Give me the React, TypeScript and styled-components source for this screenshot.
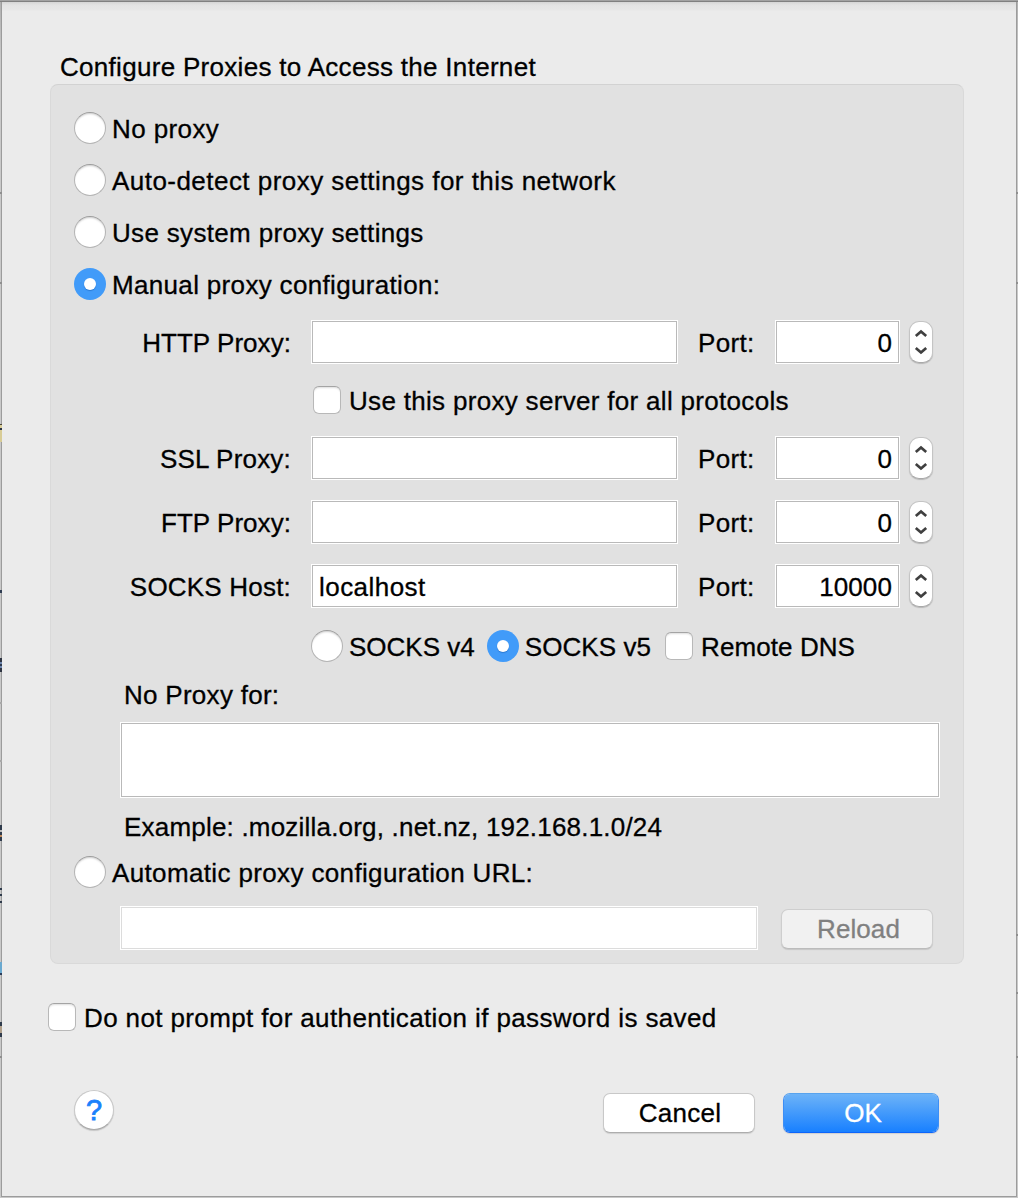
import React from "react";
import styled, { createGlobalStyle, css } from "styled-components";

const Global = createGlobalStyle`
  * { box-sizing: border-box; }
  body { margin: 0; background: #ebebeb; }
`;

const Backdrop = styled.div`
  position: relative;
  width: 1018px;
  height: 1198px;
  padding: 2px 1px 1px 1px;
  overflow: hidden;
  background: linear-gradient(#a2a2a2 0 1px, #808080 1px 2px, #b0b0b0 2px, #c9c9c9 60px);
  font: 26px/32px "Liberation Sans", Arial, sans-serif;
  color: #000;
`;

const Mark = styled.i<{ $side: "left" | "right"; $y: number; $h: number; $color: string }>`
  position: absolute;
  ${(p) => p.$side}: 0;
  top: ${(p) => p.$y}px;
  width: 2px;
  height: ${(p) => p.$h}px;
  background: ${(p) => p.$color};
`;

const Sheet = styled.main`
  height: 1195px;
  display: flex;
  flex-direction: column;
  padding-left: 49px;
  border: 1px solid #9c9c9c;
  border-top: 0;
  background: linear-gradient(#d5d5d5, #e3e3e3 3px, #e7e7e7 8px, #ebebeb 9px);
`;

const Text = styled.span<{ $ls?: number }>`
  white-space: pre;
  letter-spacing: ${(p) => p.$ls ?? 0}px;
  -webkit-text-stroke: 0.3px currentColor;
`;

const Title = styled.h1`
  margin: 0;
  height: 82px;
  padding: 49px 0 0 9px;
  font-size: 26px;
  font-weight: 400;
`;

const Panel = styled.section`
  width: 914px;
  height: 880px;
  margin-left: -1px;
  padding: 17px 23px 0 23px;
  border: 1px solid #d9d9d9;
  border-top-color: #d2d2d2;
  border-radius: 8px;
  background: #e1e1e1;
`;

const Row = styled.div<{ $h: number; $indent?: number }>`
  display: flex;
  align-items: center;
  height: ${(p) => p.$h}px;
  padding-left: ${(p) => p.$indent ?? 0}px;
`;

const Caption = styled.div`
  padding-top: 2px;
`;

const Choice = styled.label<{ $gap: number; $after?: number }>`
  display: flex;
  align-items: center;
  gap: ${(p) => p.$gap}px;
  margin-right: ${(p) => p.$after ?? 0}px;
`;

const Radio = styled.span<{ $on?: boolean }>`
  display: grid;
  place-items: center;
  width: 32px;
  height: 32px;
  border-radius: 50%;
  ${(p) =>
    p.$on
      ? css`
          background: #419bf9;
          &::after {
            content: "";
            width: 12px;
            height: 12px;
            border-radius: 50%;
            background: #fff;
            box-shadow: 0 1px 1px rgba(0, 60, 140, 0.35);
          }
        `
      : css`
          border: 1px solid #b4b4b4;
          border-top-color: #9c9c9c;
          background: #fff;
          box-shadow: inset 0 2px 2px -1px #ccc;
        `}
`;

const Check = styled.span`
  width: 28px;
  height: 28px;
  border: 1px solid #b8b8b8;
  border-top-color: #a4a4a4;
  border-radius: 6px;
  background: #fff;
  box-shadow: inset 0 2px 2px -1px #ddd;
`;

const FieldLabel = styled.div`
  width: 217px;
  margin-right: 20px;
  padding-top: 2px;
  text-align: right;
`;

const PortLabel = styled.div`
  width: 97px;
  padding: 2px 0 0 20px;
`;

const Field = styled.div<{ $w: number; $h?: number; $right?: boolean; $disabled?: boolean }>`
  display: flex;
  align-items: center;
  justify-content: ${(p) => (p.$right ? "flex-end" : "flex-start")};
  flex: none;
  width: ${(p) => p.$w}px;
  height: ${(p) => p.$h ?? 44}px;
  padding: 2px 7px 0;
  border: 1px solid #fff;
  background: #fff;
  box-shadow: inset 0 0 0 1px ${(p) => (p.$disabled ? "#dcdcdc" : "#b9b9b9")};
`;

const Stepper = styled.svg`
  width: 24px;
  height: 42px;
  margin-left: 9px;
  border: 1px solid #c4c4c4;
  border-bottom-color: #a9a9a9;
  border-radius: 10px;
  background: #fff;
  box-shadow: 0 1px 1px rgba(0, 0, 0, 0.18);
`;

const Button = styled.button<{ $kind?: "primary" | "disabled" }>`
  flex: none;
  width: 152px;
  height: 40px;
  padding: 0 0 0 2px;
  border: 1px solid #c8c8c8;
  border-bottom-color: #adadad;
  border-radius: 7px;
  background: #fff;
  box-shadow: 0 1px 1px rgba(0, 0, 0, 0.12);
  font: inherit;
  line-height: 38px;
  color: #000;
  ${(p) =>
    p.$kind === "disabled" &&
    css`
      margin: 2px 0 0 23px;
      padding-left: 3px;
      border-color: #cecece;
      border-bottom-color: #bcbcbc;
      background: #f1f1f1;
      color: #808080;
    `}
  ${(p) =>
    p.$kind === "primary" &&
    css`
      width: 156px;
      padding-left: 4px;
      border-color: #58a3ee #3d8ef5 #0d65fb;
      background: linear-gradient(#6db3f8, #1880ff) padding-box;
      color: #fff;
    `}
`;

const Prompt = styled.div`
  display: flex;
  align-items: center;
  height: 52px;
  margin: 27px 0 0 -3px;
`;

const Footer = styled.footer`
  display: flex;
  align-items: flex-start;
  padding-left: 23px;
  margin-top: 47px;
`;

const Help = styled.button`
  width: 40px;
  height: 40px;
  margin-right: 489px;
  padding: 0;
  border: 1px solid #c8c8c8;
  border-bottom-color: #aaa;
  border-radius: 50%;
  background: #fff;
  box-shadow: 0 1px 1px rgba(0, 0, 0, 0.16);
  font: 29px/38px "Liberation Sans", Arial, sans-serif;
  -webkit-text-stroke: 0.8px currentColor;
  color: #1a80fb;
`;

const Actions = styled.div`
  display: flex;
  gap: 28px;
  padding-top: 3px;
`;

const edgeMarks: { y: number; h: number; color: string; both?: boolean }[] = [
  { y: 192, h: 2, color: "#8f8f8f", both: true },
  { y: 282, h: 2, color: "#8f8f8f", both: true },
  { y: 424, h: 18, color: "linear-gradient(#4a4538 1px, #d8cc96 1px 4px, #2c3442 4px 6px, #d8cc96 6px)" },
  { y: 590, h: 3, color: "#2f3d52" },
  { y: 658, h: 14, color: "linear-gradient(#2f3542 4px, #7088b0 4px 6px, #2f3d52 6px 8px, #7088b0 8px 10px, #2f3542 10px)" },
  { y: 702, h: 2, color: "#a8a8a8" },
  { y: 760, h: 2, color: "#a8a8a8" },
  { y: 825, h: 16, color: "linear-gradient(#2f3b4c 5px, #bbb 5px 7px, #2f3b4c 7px 10px, #c08a5c 10px 12px, #2f3b4c 12px)" },
  { y: 888, h: 2, color: "#2f3b4c" },
  { y: 894, h: 2, color: "#2f3b4c" },
  { y: 901, h: 2, color: "#2f3b4c" },
  { y: 962, h: 13, color: "linear-gradient(#6aa9d0 11px, #2a3c5a 11px)" },
  { y: 1022, h: 15, color: "linear-gradient(#2f3b4c 4px, #b0a08c 4px 11px, #2f3b4c 11px)" },
  { y: 1056, h: 2, color: "#8f8f8f" },
];

const rightMarks = [934, 992, 1056];

function RadioOption({ text, on, ls, after }: { text: string; on?: boolean; ls?: number; after?: number }) {
  return (
    <Choice $gap={6} $after={after}>
      <Radio $on={on} />
      <Caption><Text $ls={ls}>{text}</Text></Caption>
    </Choice>
  );
}

function CheckOption({ text, ls }: { text: string; ls?: number }) {
  return (
    <Choice $gap={8}>
      <Check />
      <Caption><Text $ls={ls}>{text}</Text></Caption>
    </Choice>
  );
}

function ProxyRow({ label, host, port, ls }: { label: string; host?: string; port: string; ls?: number }) {
  return (
    <Row $h={64}>
      <FieldLabel>
        <Text $ls={ls}>{label}</Text>
      </FieldLabel>
      <Field $w={367}>
        <Text $ls={0.45}>{host}</Text>
      </Field>
      <PortLabel>
        <Text $ls={0.35}>Port:</Text>
      </PortLabel>
      <Field $w={125} $right>
        <Text $ls={0.1}>{port}</Text>
      </Field>
      <Stepper viewBox="0 0 22 40" fill="none" stroke="#404040" strokeWidth="2.7">
        <path d="M5.8 14 11 9.5l5.2 4.5M5.8 26l5.2 4.5 5.2-4.5" />
      </Stepper>
    </Row>
  );
}

export default function App() {
  return (
    <Backdrop>
      <Global />
      <Sheet>
        <Title>
          <Text $ls={0.3}>Configure Proxies to Access the Internet</Text>
        </Title>
        <Panel>
          <Row $h={52}><RadioOption text="No proxy" ls={0.4} /></Row>
          <Row $h={52}><RadioOption text="Auto-detect proxy settings for this network" ls={0.46} /></Row>
          <Row $h={52}><RadioOption text="Use system proxy settings" ls={0.33} /></Row>
          <Row $h={52}><RadioOption text="Manual proxy configuration:" ls={0.33} on /></Row>
          <ProxyRow label="HTTP Proxy:" port="0" ls={0.05} />
          <Row $h={52} $indent={239}><CheckOption text="Use this proxy server for all protocols" ls={0.31} /></Row>
          <ProxyRow label="SSL Proxy:" port="0" ls={0.2} />
          <ProxyRow label="FTP Proxy:" port="0" ls={0.05} />
          <ProxyRow label="SOCKS Host:" host="localhost" port="10000" ls={0.2} />
          <Row $h={56} $indent={237}>
            <RadioOption text="SOCKS v4" after={12} />
            <RadioOption text="SOCKS v5" on ls={0.08} after={14} />
            <CheckOption text="Remote DNS" ls={0.08} />
          </Row>
          <Row $h={40} $indent={50}><Caption><Text $ls={0.28}>No Proxy for:</Text></Caption></Row>
          <Row $h={92} $indent={46}><Field $w={820} $h={76} /></Row>
          <Row $h={40} $indent={50}><Caption><Text $ls={0.2}>Example: .mozilla.org, .net.nz, 192.168.1.0/24</Text></Caption></Row>
          <Row $h={52}><RadioOption text="Automatic proxy configuration URL:" ls={0.36} /></Row>
          <Row $h={60} $indent={46}>
            <Field $w={638} $disabled />
            <Button $kind="disabled" disabled><Text $ls={0.1}>Reload</Text></Button>
          </Row>
        </Panel>
        <Prompt>
          <CheckOption text="Do not prompt for authentication if password is saved" ls={0.375} />
        </Prompt>
        <Footer>
          <Help>?</Help>
          <Actions>
            <Button><Text $ls={0.25}>Cancel</Text></Button>
            <Button $kind="primary"><Text>OK</Text></Button>
          </Actions>
        </Footer>
      </Sheet>
      {edgeMarks.map((m) => (
        <Mark key={m.y} $side="left" $y={m.y} $h={m.h} $color={m.color} />
      ))}
      {edgeMarks.filter((m) => m.both).map((m) => (
        <Mark key={m.y} $side="right" $y={m.y} $h={m.h} $color={m.color} />
      ))}
      {rightMarks.map((y) => (
        <Mark key={y} $side="right" $y={y} $h={2} $color="#8f8f8f" />
      ))}
    </Backdrop>
  );
}
